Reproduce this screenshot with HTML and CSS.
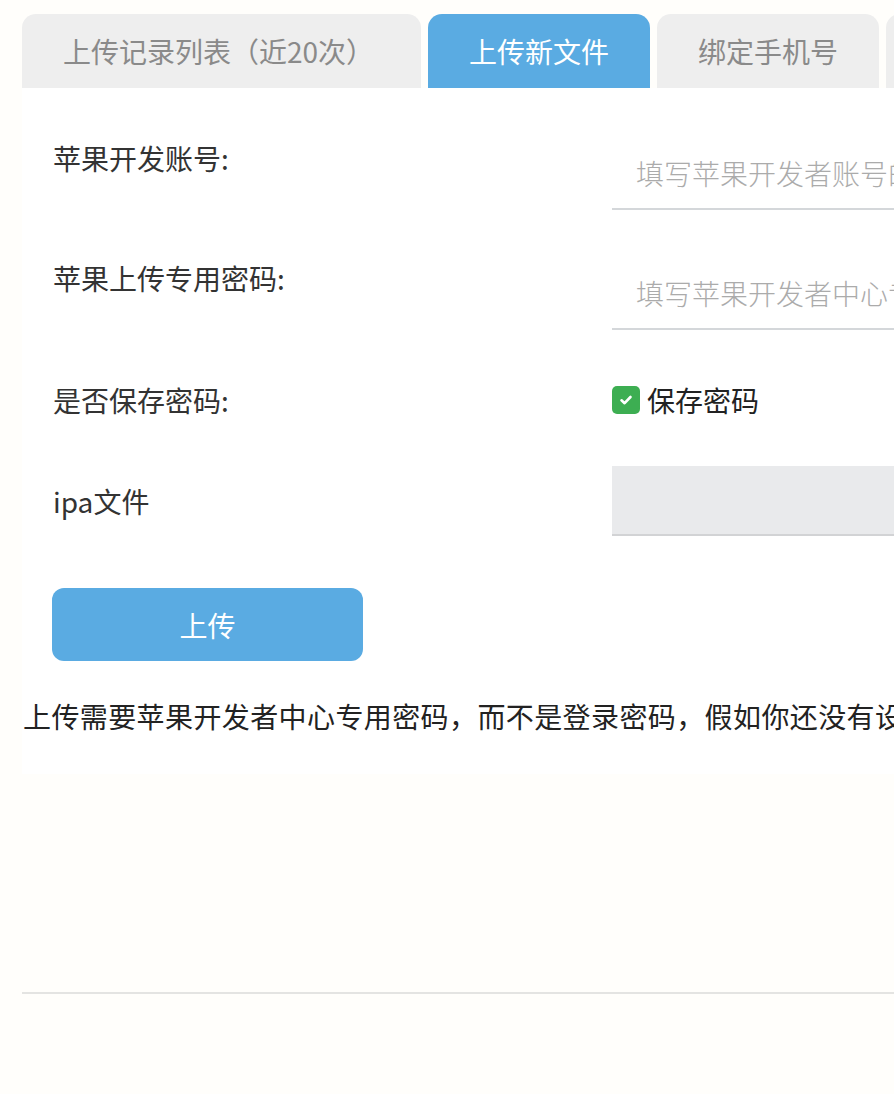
FILE: index.html
```html
<!DOCTYPE html>
<html lang="zh-CN">
<head>
<meta charset="utf-8">
<title>上传新文件</title>
<link rel="stylesheet" href="styles.css">
</head>
<body>
<div class="tabs">
  <div class="tab tab-wide">上传记录列表（近20次）</div>
  <div class="tab tab-active">上传新文件</div>
  <div class="tab">绑定手机号</div>
  <div class="tab tab-more"></div>
</div>
<div class="panel">
  <div class="form">
    <div class="row row-input">
      <div class="label">苹果开发账号:</div>
      <input class="field" type="text" placeholder="填写苹果开发者账号的邮箱地址">
    </div>
    <div class="row row-input">
      <div class="label">苹果上传专用密码:</div>
      <input class="field" type="password" placeholder="填写苹果开发者中心专用密码">
    </div>
    <div class="row row-check">
      <div class="label">是否保存密码:</div>
      <div class="check">
        <span class="box">
          <svg width="16" height="16" viewBox="0 0 16 16"><path d="M3.5 8.3 L6.6 11.2 L12.5 5" fill="none" stroke="#fff" stroke-width="2.6" stroke-linecap="round" stroke-linejoin="round"/></svg>
        </span>
        <span class="check-text">保存密码</span>
      </div>
    </div>
    <div class="row row-file">
      <div class="label">ipa文件</div>
      <div class="file"></div>
    </div>
    <button class="btn" type="button">上传</button>
  </div>
  <p class="help">上传需要苹果开发者中心专用密码，而不是登录密码，假如你还没有设置专用密码，请先登录苹果开发者中心生成。</p>
</div>
<div class="footer"></div>
</body>
</html>
```

FILE: styles.css
```css
html, body {
  overflow: hidden;
}
body {
  margin: 0;
  padding: 14px 0 0 22px;
  background: #fffefb;
  font-family: "Noto Sans CJK SC", "Noto Sans", sans-serif;
  height: 1094px;
  box-sizing: border-box;
}
.tabs {
  display: flex;
  gap: 7px;
  overflow: hidden;
}
.tab {
  flex-shrink: 0;
  width: 222px;
  box-sizing: border-box;
  height: 74px;
  line-height: 74px;
  padding: 0 41px;
  font-size: 28px;
  color: #8a8a8a;
  background: #eeeeee;
  border-radius: 14px 14px 0 0;
  white-space: nowrap;
  text-align: center;
}
.tab-wide {
  width: 399px;
  text-align: left;
}
.tab-more {
  width: 200px;
}
.tab-active {
  background: #5aabe2;
  color: #ffffff;
}
.panel {
  background: #ffffff;
  padding: 50px 0 40px 0;
}
.form {
  padding-left: 31px;
}
.row {
  display: flex;
  margin-bottom: 48px;
}
.label {
  flex: 0 0 559px;
  font-size: 28px;
  line-height: 36px;
  color: #333333;
  white-space: nowrap;
}
.row-input {
  align-items: flex-start;
}
.row-input .label {
  padding-top: 2px;
}
.field {
  flex: 1;
  min-width: 0;
  height: 72px;
  box-sizing: border-box;
  border: none;
  border-bottom: 2px solid #d4d7da;
  padding: 0 0 0 24px;
  font-family: "Noto Sans CJK SC", "Noto Sans", sans-serif;
  font-size: 28px;
  font-weight: 300;
  color: #333;
  background: transparent;
  outline: none;
}
.field::placeholder {
  color: #ababab;
  font-weight: 300;
}
.row-check {
  height: 44px;
  align-items: center;
  margin-bottom: 44px;
}
.check {
  display: flex;
  align-items: center;
  gap: 7px;
}
.box {
  width: 28px;
  height: 28px;
  border-radius: 5px;
  background: #3dae52;
  display: flex;
  align-items: center;
  justify-content: center;
}
.check-text {
  font-size: 28px;
  line-height: 36px;
  color: #222222;
}
.row-file {
  height: 70px;
  align-items: center;
  margin-bottom: 52px;
}
.file {
  flex: 1;
  height: 70px;
  box-sizing: border-box;
  background: #e9eaec;
  border-bottom: 2px solid #d2d3d5;
}
.btn {
  display: block;
  margin-left: -1px;
  width: 311px;
  height: 73px;
  border: none;
  border-radius: 12px;
  background: #5aabe2;
  color: #ffffff;
  font-family: "Noto Sans CJK SC", "Noto Sans", sans-serif;
  font-size: 28px;
  padding: 0;
}
.help {
  margin: 37px 0 0 1px;
  font-size: 28px;
  line-height: 36px;
  letter-spacing: 0.4px;
  color: #222222;
  white-space: nowrap;
  overflow: hidden;
}
.footer {
  margin-top: 218px;
  border-top: 2px solid #e4e4e2;
}
```
